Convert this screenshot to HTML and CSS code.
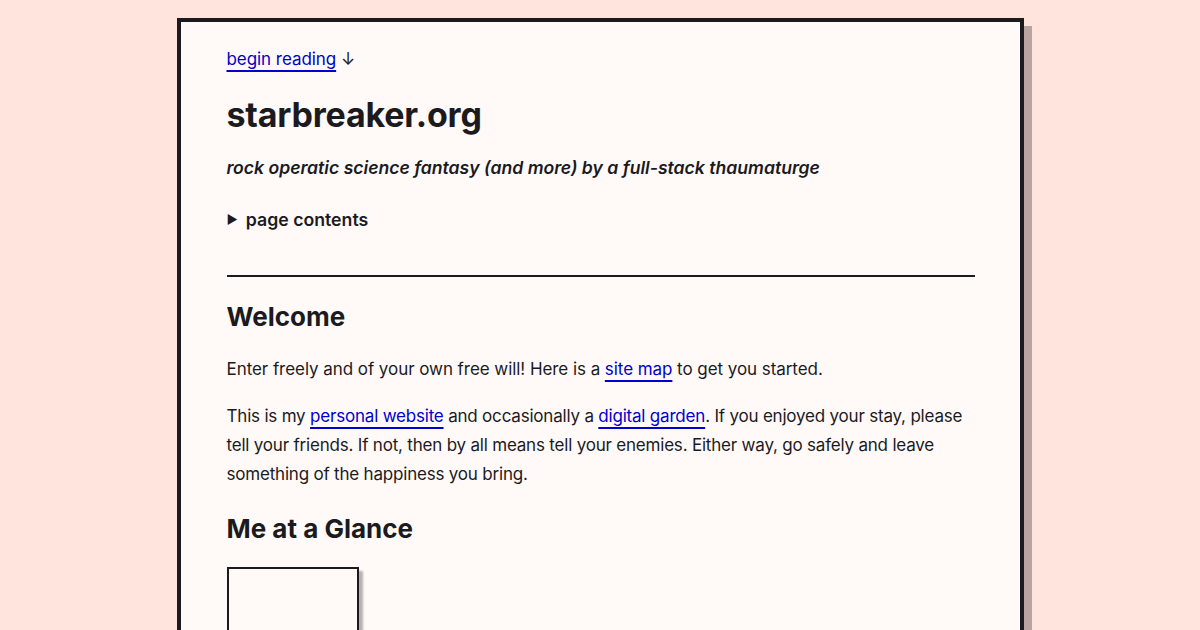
FILE: index.html
```html
<!DOCTYPE html>
<html lang="en">
<head>
<meta charset="utf-8">
<title>starbreaker.org</title>
<link rel="stylesheet" href="styles.css">
</head>
<body>
<main class="card">
  <p class="skip"><a href="#main">begin reading</a> ↓</p>
  <header class="masthead">
    <h1 class="title">starbreaker.org</h1>
    <p class="tagline">rock operatic science fantasy (and more) by a full-stack thaumaturge</p>
    <details class="toc">
      <summary>page contents</summary>
    </details>
  </header>
  <hr class="rule">
  <section id="main">
    <h2 class="heading">Welcome</h2>
    <p>Enter freely and of your own free will! Here is a <a href="#">site map</a> to get you started.</p>
    <p class="tight">This is my <a href="#">personal website</a> and occasionally a <a href="#">digital garden</a>. If you enjoyed your stay, please tell your friends. If not, then by all means tell your enemies. Either way, go safely and leave something of the happiness you bring.</p>
    <h2 class="heading">Me at a Glance</h2>
    <div class="portrait"></div>
  </section>
</main>
</body>
</html>
```
FILE: styles.css
```css
html, body {
  margin: 0;
  padding: 0;
}
body {
  background: #ffe4de;
  font-family: Inter, "Noto Sans", sans-serif;
  color: #1b1a1f;
  font-size: 17px;
  line-height: 29px;
  letter-spacing: -0.06px;
  padding-top: 18px;
}
.card {
  display: block;
  width: 748px;
  margin: 0 auto;
  background: #fffaf8;
  border: 4px solid #1b1a1f;
  box-shadow: 8px 8px 0 #b9a4a4;
  padding: 23px 45px 60px 46px;
  min-height: 700px;
}
a {
  color: #0000cc;
  text-decoration: underline;
  text-decoration-thickness: 1.5px;
  text-underline-offset: 5px;
}
p {
  margin: 0 0 18px;
}
.tight {
  letter-spacing: -0.2px;
}
.skip {
  margin: 0;
}
.title {
  font-size: 34px;
  line-height: 44px;
  font-weight: 700;
  margin: 19px 0 16px;
  letter-spacing: -0.2px;
}
.tagline {
  font-style: italic;
  font-weight: 600;
  font-size: 17.6px;
  letter-spacing: 0;
  margin: 0 0 23px;
}
.toc summary {
  font-weight: 600;
  font-size: 17.7px;
  letter-spacing: 0;
  cursor: pointer;
  list-style: none;
}
.toc summary::-webkit-details-marker {
  display: none;
}
.toc summary::before {
  content: "▶";
  font-size: 12px;
  margin-right: 8px;
  position: relative;
  top: -2px;
}
.rule {
  border: none;
  border-top: 2px solid #1b1a1f;
  margin: 39px 0 20px;
}
.heading {
  font-size: 26px;
  line-height: 40px;
  font-weight: 700;
  letter-spacing: 0;
  margin: 0 0 18px;
}
p + .heading {
  margin-top: 20px;
}
.portrait {
  width: 128px;
  height: 120px;
  border: 2px solid #1b1a1f;
  box-shadow: 4px 4px 2px #b9b0b0;
}
```
